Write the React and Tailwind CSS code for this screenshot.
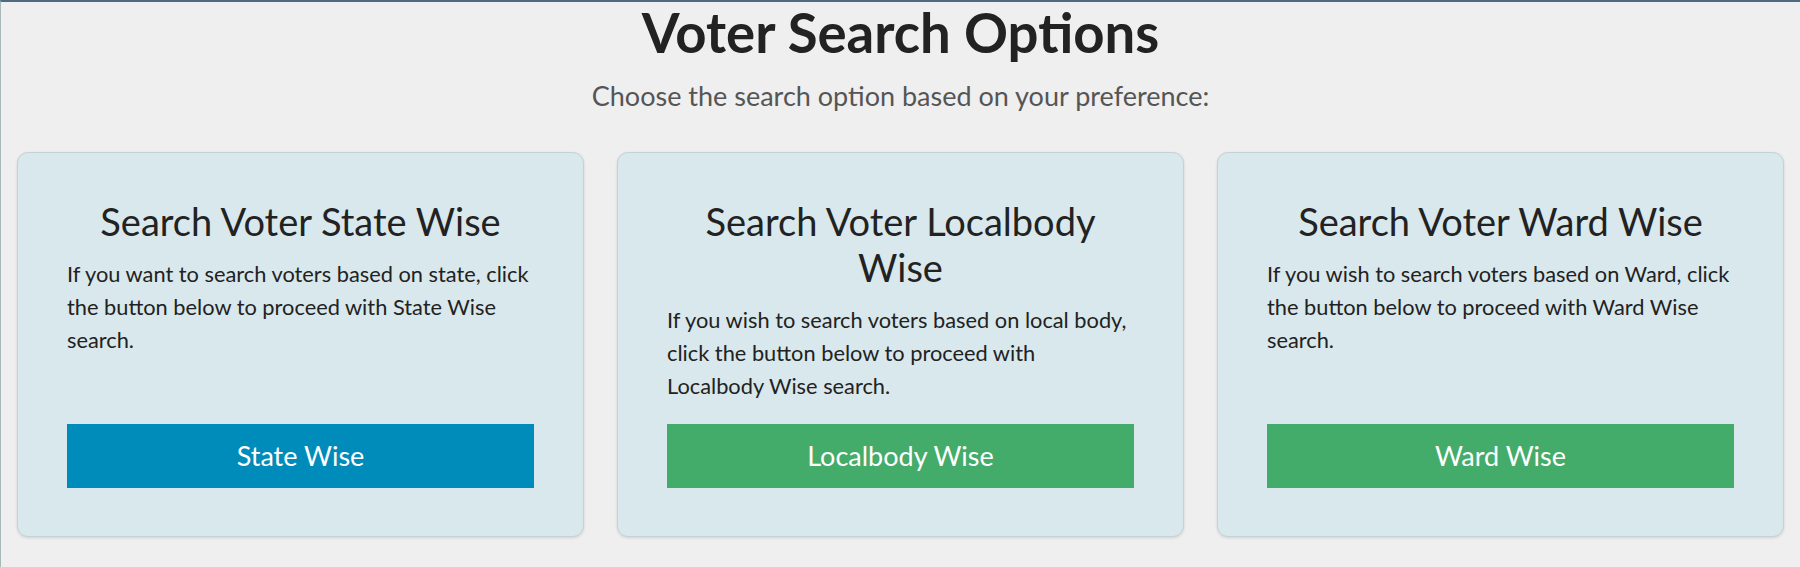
import React from "react";

const options = [
  {
    title: "Search Voter State Wise",
    text: "If you want to search voters based on state, click the button below to proceed with State Wise search.",
    button: "State Wise",
    color: "bg-[#008cba]",
  },
  {
    title: "Search Voter Localbody Wise",
    text: "If you wish to search voters based on local body, click the button below to proceed with Localbody Wise search.",
    button: "Localbody Wise",
    color: "bg-[#43ac6a]",
  },
  {
    title: "Search Voter Ward Wise",
    text: "If you wish to search voters based on Ward, click the button below to proceed with Ward Wise search.",
    button: "Ward Wise",
    color: "bg-[#43ac6a]",
  },
];

export default function App() {
  return (
    <div
      className="h-[567px] overflow-hidden bg-[#efefef] border-t-2 border-t-[#4d6b82] border-l border-l-[#a9b8b8] text-[#222]"
      style={{ fontFamily: "Lato, 'Open Sans', sans-serif" }}
    >
      {/* HEADER */}
      <div className="text-center">
        <h1 className="text-[54.5px] leading-[60px] font-bold text-[#222]">
          Voter Search Options
        </h1>
        <p className="mt-[17px] text-[27px] leading-[34px] text-[#555]">
          Choose the search option based on your preference:
        </p>
      </div>

      {/* CARDS */}
      <div className="grid grid-cols-3 gap-[33px] px-[16px] mt-[39px]">
        {options.map((opt) => (
          <div
            key={opt.button}
            className="flex flex-col rounded-[11px] border border-[#c4d2d6] bg-[#d9e8ec] shadow-[0_1px_3px_rgba(0,0,0,0.12)] px-[49px] pt-[45px] pb-[48px]"
          >
            <h2 className="text-center text-[38px] leading-[46px] text-[#222]">
              {opt.title}
            </h2>
            <p className="flex-1 mt-[13px] text-[21.8px] leading-[33px] text-[#222]">
              {opt.text}
            </p>
            <button
              className={`mt-[22px] w-full h-[64px] ${opt.color} text-white text-[27px]`}
            >
              {opt.button}
            </button>
          </div>
        ))}
      </div>
    </div>
  );
}
